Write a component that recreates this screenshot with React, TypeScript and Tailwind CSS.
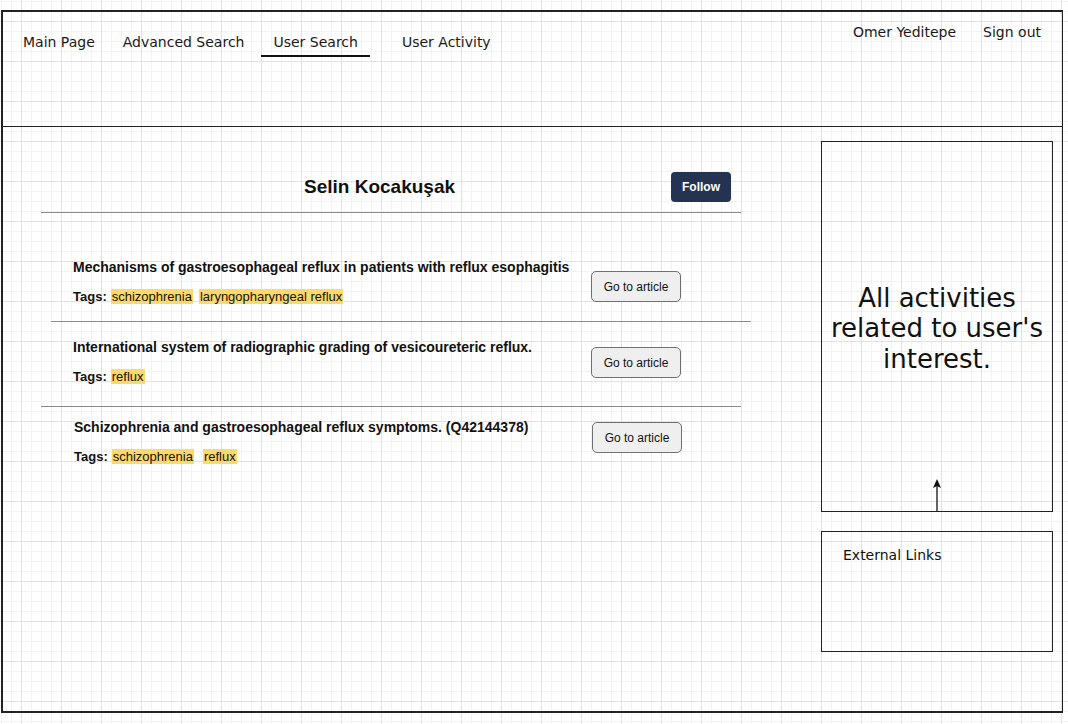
const navFont = "font-['DejaVu_Sans',Verdana,sans-serif]"

type Article = {
  title: string
  tags: { name: string; gap: string }[]
  btnTop: string
  wrap: string
}

const articles: Article[] = [
  {
    title: 'Mechanisms of gastroesophageal reflux in patients with reflux esophagitis',
    tags: [
      { name: 'schizophrenia', gap: 'ml-[4px]' },
      { name: 'laryngopharyngeal reflux', gap: 'ml-[6px]' },
    ],
    btnTop: 'mt-[12px]',
    wrap: 'mt-[46px] ml-[48px] w-[700px] pl-[22px] pb-[16px] border-b border-[#8a8a8a]',
  },
  {
    title: 'International system of radiographic grading of vesicoureteric reflux.',
    tags: [{ name: 'reflux', gap: 'ml-[4px]' }],
    btnTop: 'mt-[8px]',
    wrap: 'mt-[17px] ml-[38px] w-[700px] pl-[32px] pb-[21px] border-b border-[#8a8a8a]',
  },
  {
    title: 'Schizophrenia and gastroesophageal reflux symptoms. (Q42144378)',
    tags: [
      { name: 'schizophrenia', gap: 'ml-[4px]' },
      { name: 'reflux', gap: 'ml-[9px]' },
    ],
    btnTop: 'mt-[3px]',
    wrap: 'mt-[12px] ml-[38px] w-[700px] pl-[33px]',
  },
]

function ArticleRow({ a }: { a: Article }) {
  return (
    <div className={`flex ${a.wrap}`}>
      <div className="w-[518px] flex flex-col">
        <div className="text-[14px] leading-[16px] font-bold text-[#111]">{a.title}</div>
        <div className="mt-[14px] text-[13px] leading-[16px] text-[#111]">
          <span className="font-bold">Tags:</span>
          {a.tags.map((t) => (
            <span key={t.name} className={`${t.gap} inline-block bg-[#fdd96a] px-[1px] leading-[15px]`}>
              {t.name}
            </span>
          ))}
        </div>
      </div>
      <button
        className={`${a.btnTop} w-[90px] h-[31px] rounded-[5px] border border-[#707070] bg-[#efefef] text-[12px] text-[#111] self-start`}
      >
        Go to article
      </button>
    </div>
  )
}

export default function App() {
  return (
    <div
      className="w-[1068px] h-[724px] pt-[10px] pl-[1px] font-['Liberation_Sans',Arial,sans-serif] bg-white bg-[linear-gradient(to_right,#e2e2e2_1px,transparent_1px),linear-gradient(to_bottom,#e2e2e2_1px,transparent_1px),linear-gradient(to_right,#f2f2f2_1px,transparent_1px),linear-gradient(to_bottom,#f2f2f2_1px,transparent_1px)] bg-[size:40px_40px,40px_40px,10px_10px,10px_10px] bg-[position:21px_21px]"
    >
      <div className="w-[1062px] h-[703px] border-t-2 border-l-2 border-r-[1.5px] border-b-2 border-[#222] flex flex-col">
        {/* header */}
        <div className={`h-[115px] border-b-[1.5px] border-[#222] flex justify-between ${navFont} text-[14px] text-[#1a1a1a]`}>
          <nav className="flex items-start pt-[22px] pl-[20px]">
            <span className="leading-[17px]">Main Page</span>
            <span className="ml-[28px] leading-[17px]">Advanced Search</span>
            <span className="ml-[17px] px-[12px] pb-[4px] leading-[17px] border-b-2 border-[#111]">User Search</span>
            <span className="ml-[32px] leading-[17px]">User Activity</span>
          </nav>
          <div className="flex items-start pt-[12px] pr-[21px]">
            <span className="leading-[17px]">Omer Yeditepe</span>
            <span className="ml-[27px] leading-[17px]">Sign out</span>
          </div>
        </div>

        {/* body */}
        <div className="flex flex-1">
          <div className="flex-1 pt-[45px]">
            <div className="ml-[38px] w-[700px] flex items-center pb-[10px] border-b border-[#8a8a8a]">
              <span className="ml-[263px] text-[19px] font-bold text-[#111] leading-[22px]">Selin Kocakuşak</span>
              <button className="ml-auto mr-[10px] w-[60px] h-[30px] rounded-[4px] bg-[#243352] text-white text-[12px] font-bold">
                Follow
              </button>
            </div>
            {articles.map((a) => (
              <ArticleRow key={a.title} a={a} />
            ))}
          </div>

          <div className={`w-[232px] mr-[9px] pt-[14px] flex flex-col ${navFont} text-[#111]`}>
            <div className="relative h-[371px] border-[1.5px] border-[#222] flex items-center justify-center text-center">
              <p className="text-[26px] leading-[30.5px] px-[4px] mt-[4px]">
                All activities related to user's interest.
              </p>
              <svg className="absolute left-[108px] bottom-0" width="14" height="32" viewBox="0 0 14 32">
                <line x1="7" y1="32" x2="7" y2="6" stroke="#111" strokeWidth="1.3" />
                <path d="M7 0 L11 9 L7 7 L3 9 Z" fill="#111" />
              </svg>
            </div>
            <div className="mt-[19px] h-[121px] border-[1.5px] border-[#222] pl-[21px] pt-[11px]">
              <span className="text-[14px] leading-[17px]">External Links</span>
            </div>
          </div>
        </div>
      </div>
    </div>
  )
}
